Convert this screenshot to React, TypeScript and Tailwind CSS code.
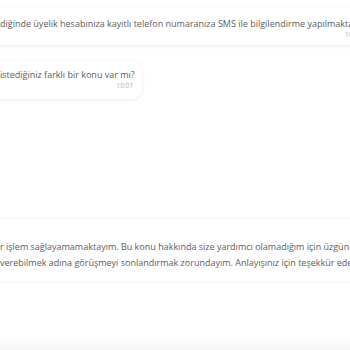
export default function App() {
  return (
    <div
      className="relative w-[350px] h-[350px] overflow-hidden bg-white text-[#5c5c5c]"
      style={{ fontFamily: '"Open Sans", "Noto Sans", sans-serif' }}
    >
      <div className="flex flex-col">
        {/* first message, wider than the view */}
        <div className="mt-[7px] -ml-[12px] w-[390px] h-[38px] rounded-xl bg-white shadow-[0_1px_4px_rgba(0,0,0,0.09)] pl-[12px] pt-[11px]">
          <p className="text-[9px] leading-[12px] whitespace-nowrap">
            diğinde üyelik hesabınıza kayıtlı telefon numaranıza SMS ile bilgilendirme yapılmaktadır.
          </p>
          <p className="pl-[345px] pt-[1px] text-[6.5px] leading-[8px] text-[#b0b0b0] whitespace-nowrap">10:07</p>
        </div>

        {/* second message */}
        <div className="mt-[16px] -ml-[20px] w-[162px] h-[38px] rounded-[10px] bg-white shadow-[0_1px_4px_rgba(0,0,0,0.09)] pl-[20px] pr-[9px] pt-[8px]">
          <p className="text-[9px] leading-[12px] whitespace-nowrap">istediğiniz farklı bir konu var mı?</p>
          <p className="pt-[1px] text-right text-[6.5px] leading-[8px] text-[#b0b0b0]">10:07</p>
        </div>

        {/* closing message */}
        <div className="mt-[120px] -ml-[12px] w-[430px] h-[62px] rounded-xl bg-white shadow-[0_0_4px_rgba(0,0,0,0.08)] pl-[12px] pt-[20px]">
          <p className="text-[9px] leading-[16px] whitespace-nowrap">
            r işlem sağlayamamaktayım. Bu konu hakkında size yardımcı olamadığım için üzgünüm.
          </p>
          <p className="text-[9px] leading-[16px] whitespace-nowrap">
            verebilmek adına görüşmeyi sonlandırmak zorundayım. Anlayışınız için teşekkür ederim.
          </p>
        </div>
      </div>

      {/* fade at the bottom */}
      <div className="absolute bottom-0 left-0 right-0 h-[16px] bg-gradient-to-b from-white to-[#f6f6f6]" />
    </div>
  )
}
